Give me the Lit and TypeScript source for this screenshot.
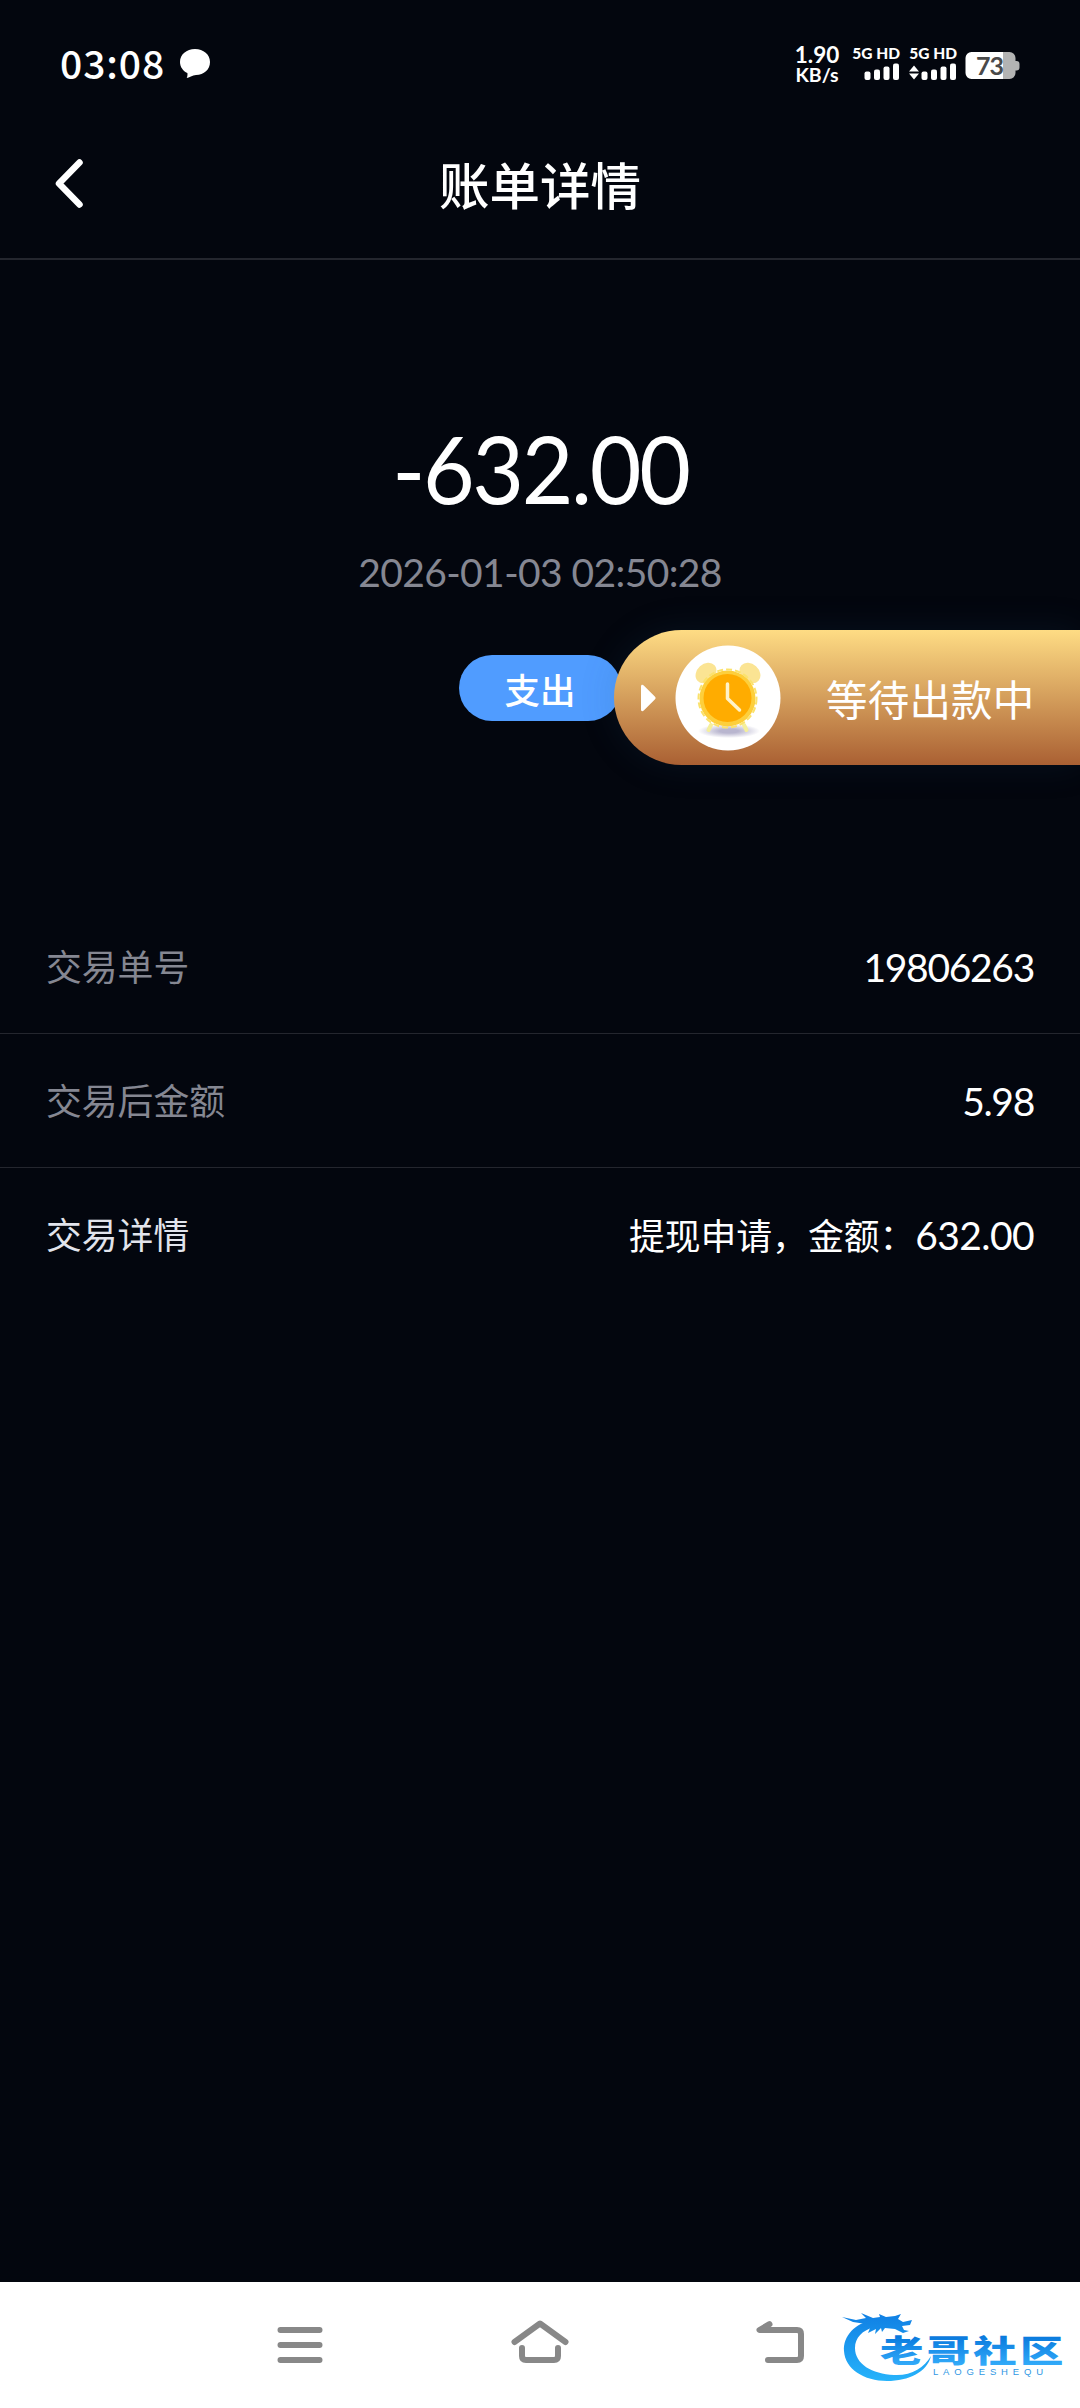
import { LitElement, css, html, svg } from "lit";
import { customElement, property } from "lit/decorators.js";

interface DetailRow {
  label: string;
  value: string;
  strong?: boolean;
}

const ROWS: DetailRow[] = [
  { label: "交易单号", value: "19806263" },
  { label: "交易后金额", value: "5.98" },
  { label: "交易详情", value: "提现申请，金额：632.00", strong: true },
];

@customElement("bill-status-bar")
export class BillStatusBar extends LitElement {
  static styles = css`
    :host {
      display: flex;
      justify-content: space-between;
      height: 126px;
      padding: 0 60px;
      box-sizing: border-box;
      color: #fff;
    }

    .left,
    .right {
      display: flex;
      align-items: flex-start;
    }

    .time {
      font: 500 39px/40px "Noto Sans CJK SC", sans-serif;
      letter-spacing: 0.9px;
      padding-top: 42px;
      margin-right: 14px;
    }

    .bubble {
      margin-top: 48px;
    }

    .speed {
      width: 46px;
      margin-right: 11px;
      padding-top: 45px;
      text-align: center;
      font: 700 22.500px/20px Lato, sans-serif;
      white-space: nowrap;
    }

    .speed .unit {
      display: block;
      font-size: 19.500px;
      line-height: 19px;
    }

    .sim {
      display: flex;
      flex-direction: column;
      align-items: flex-end;
      width: 49px;
      margin-right: 8px;
      padding-top: 45px;
    }

    .net {
      font: 900 15.500px/16px Lato, sans-serif;
      white-space: nowrap;
    }

    .battery {
      margin-top: 52px;
      overflow: visible;
    }

    .level {
      font: 700 25px Lato, sans-serif;
      fill: #4a4a4a;
    }
  `;

  private renderSim(arrows: boolean) {
    return html`
      <div class="sim">
        <span class="net">5G HD</span>
        <svg width="48" height="20" viewBox="0 0 48 20" fill="#fff">
          ${arrows ? svg`<path d="M5 4.500l5 6H0zM5 18.500l5-6H0z" />` : ""}
          <rect x="12.500" y="10.500" width="6" height="8.500" rx="2" />
          <rect x="22" y="8.500" width="6" height="10.500" rx="2" />
          <rect x="31.500" y="5.500" width="6" height="13.500" rx="2" />
          <rect x="41" y="2.500" width="6" height="16.500" rx="2" />
        </svg>
      </div>
    `;
  }

  render() {
    return html`
      <div class="left">
        <span class="time">03:08</span>
        <svg class="bubble" width="32" height="31" viewBox="0 0 32 31" fill="#fff">
          <path d="M16 1C24.500 1 31 6.500 31 14s-6 13-14 13c-3.500 0-7 2.800-9.300 3 .8-1.700.9-3.400.7-4.900C4 22.900 1 19 1 14 1 6.500 7.500 1 16 1z" />
        </svg>
      </div>
      <div class="right">
        <div class="speed">1.90<span class="unit">KB/s</span></div>
        ${this.renderSim(false)} ${this.renderSim(true)}
        <svg class="battery" width="55" height="28" viewBox="0 0 55 28">
          <path fill="#b3b3b3" d="M38 0h6.500a6 6 0 0 1 6 6v3h1a3 3 0 0 1 3 3v3.500a3 3 0 0 1-3 3h-1V21a6 6 0 0 1-6 6H38z" />
          <path fill="#fff" d="M38 0H6.500a6 6 0 0 0-6 6v15a6 6 0 0 0 6 6H38z" />
          <text class="level" x="11" y="22.500" textLength="28">73</text>
        </svg>
      </div>
    `;
  }
}

@customElement("bill-row")
export class BillRow extends LitElement {
  static styles = css`
    :host {
      display: block;
    }

    .row {
      display: flex;
      align-items: center;
      justify-content: space-between;
      height: 134px;
      padding: 3px 46px 0 46px;
      box-sizing: border-box;
      border-bottom: 1px solid #24262e;
      font: 400 35.800px/50px Lato, "Noto Sans CJK SC", sans-serif;
      color: #fff;
    }

    .row.strong {
      border-bottom-color: transparent;
    }

    .label {
      color: #858792;
    }

    .strong .label {
      color: #e2e4ec;
    }

    .digits {
      font-size: 39px;
      letter-spacing: -1.300px;
    }

    .strong .digits {
      letter-spacing: -0.600px;
    }
  `;

  @property() label = "";
  @property() value = "";
  @property({ type: Boolean }) strong = false;

  render() {
    // digits are set larger than the Chinese text beside them
    const split = this.value.search(/[\d.]+$/);
    return html`
      <div class="row ${this.strong ? "strong" : ""}">
        <span class="label">${this.label}</span>
        <span class="value"
          >${this.value.slice(0, split)}<span class="digits">${this.value.slice(split)}</span></span
        >
      </div>
    `;
  }
}

@customElement("payout-float")
export class PayoutFloat extends LitElement {
  static styles = css`
    :host {
      display: block;
    }

    .float {
      display: flex;
      align-items: center;
      width: 466px;
      height: 135px;
      padding-left: 26px;
      box-sizing: border-box;
      border-radius: 68px 0 0 68px;
      background: linear-gradient(#fedc84, #aa6033);
      box-shadow: 0 0 36px rgba(40, 90, 120, 0.15);
    }

    .clock {
      margin-left: 19px;
    }

    .text {
      margin-left: 45px;
      font: 400 41.500px/60px "Noto Sans CJK SC", sans-serif;
      letter-spacing: 0.200px;
      color: #fff;
      white-space: nowrap;
    }
  `;

  render() {
    return html`
      <div class="float">
        <svg width="16" height="28" viewBox="0 0 16 28" fill="#fff">
          <path d="M1 2.500C1 .6 2.500.2 4 1.700L14.800 12.400q1.600 1.600 0 3.200L4 26.300C2.500 27.800 1 27.400 1 25.500z" />
        </svg>
        <svg class="clock" width="106" height="106" viewBox="0 0 106 106">
          <defs>
            <radialGradient id="shade">
              <stop offset="0.3" stop-color="#b9b6cf" />
              <stop offset="1" stop-color="#b9b6cf" stop-opacity="0" />
            </radialGradient>
          </defs>
          <circle cx="53" cy="53" r="52.500" fill="#fff" />
          <ellipse cx="54" cy="86" rx="31" ry="7" fill="url(#shade)" />
          <g fill="#fbe493">
            <ellipse cx="31" cy="28" rx="11.500" ry="9" transform="rotate(-42 31 28)" />
            <ellipse cx="75" cy="28" rx="11.500" ry="9" transform="rotate(42 75 28)" />
          </g>
          <path d="M36 80l-2.500 5M69 80l2.500 5" stroke="#f5ef9b" stroke-width="4" stroke-linecap="round" />
          <circle cx="52.500" cy="53.500" r="28" fill="#fdcf3c" />
          <circle cx="52.500" cy="53.500" r="29" fill="none" stroke="#fbe26c" stroke-width="2" stroke-dasharray="6 3" />
          <circle cx="52.500" cy="53" r="24" fill="#ffac00" />
          <path d="M52.500 39v14.500l12 11.500" fill="none" stroke="#fff3c9" stroke-width="3.500" stroke-linecap="round" stroke-linejoin="round" />
        </svg>
        <span class="text">等待出款中</span>
      </div>
    `;
  }
}

@customElement("system-nav")
export class SystemNav extends LitElement {
  static styles = css`
    :host {
      display: block;
      background: #fff;
    }

    .nav {
      display: grid;
      grid-template-columns: repeat(3, 240px);
      justify-content: center;
      justify-items: center;
      height: 126px;
      padding-top: 33px;
      box-sizing: border-box;
    }

    .nav svg {
      fill: none;
      stroke: #888;
      stroke-width: 6;
      stroke-linecap: round;
      stroke-linejoin: round;
    }
  `;

  render() {
    return html`
      <div class="nav">
        <svg width="60" height="60" viewBox="0 0 60 60">
          <path d="M10.500 15h39M10.500 30h39M10.500 45h39" />
        </svg>
        <svg width="60" height="60" viewBox="0 0 60 60">
          <path d="M4.500 27L30 8.500L55.500 27M12 33v8q0 4 4 4h28q4 0 4-4v-8" />
        </svg>
        <svg width="60" height="60" viewBox="0 0 60 60">
          <path d="M19.500 9.200L9.500 15H47q4 0 4 4v22q0 4-4 4H18" />
        </svg>
      </div>
    `;
  }
}

@customElement("site-logo")
export class SiteLogo extends LitElement {
  static styles = css`
    :host {
      display: block;
    }

    svg {
      display: block;
    }

    .name {
      font: 900 31px "Noto Sans CJK SC", sans-serif;
    }

    .latin {
      font: 400 9.500px "Liberation Sans", sans-serif;
      fill: #2f97e4;
    }
  `;

  render() {
    return html`
      <svg width="230" height="80" viewBox="0 0 230 80">
        <defs>
          <linearGradient id="blue" gradientUnits="userSpaceOnUse" x1="0" y1="10" x2="0" y2="78">
            <stop offset="0" stop-color="#1080e4" />
            <stop offset="1" stop-color="#27b4fb" />
          </linearGradient>
          <linearGradient id="letters" x1="0" y1="0" x2="0" y2="1">
            <stop offset="0.2" stop-color="#0878dc" />
            <stop offset="1" stop-color="#3ab4ff" />
          </linearGradient>
        </defs>
        <path
          fill="url(#blue)"
          d="M33 16C15 19 3 32 4 47c1 18 20 30 43 30 22 0 40-9 44-25C84 64 71 72 54 71 32 70 15 60 15 44c0-10 7-18 20-21z"
        />
        <path
          fill="url(#blue)"
          d="M2 13l14 3 10-2-5-5 12 5 7-1-1-3 7 3 9-1 6-2-3 5 5 3 9-2-2 5-8 1 2 4 5 1-6 2-8-4-10-1-3 4-1-4-6 6 1-5-8 4 2-5-9 1 5-5-13-2z"
        />
        <g fill="url(#letters)" class="name">
          <text transform="translate(40 57.500) scale(1.4 0.98)" textLength="131">老哥社区</text>
        </g>
        <text class="latin" x="93" y="70.500" textLength="110">LAOGESHEQU</text>
      </svg>
    `;
  }
}

@customElement("app-root")
export class AppRoot extends LitElement {
  static styles = css`
    :host {
      display: block;
    }

    .screen {
      position: relative;
      display: flex;
      flex-direction: column;
      width: 1080px;
      height: 2408px;
      overflow: hidden;
      background: #03060e;
      color: #fff;
      font-family: Lato, "Noto Sans CJK SC", sans-serif;
    }

    .header {
      display: grid;
      grid-template-columns: 140px 1fr 140px;
      align-items: center;
      height: 134px;
      padding-bottom: 18px;
      box-sizing: border-box;
      border-bottom: 2px solid #24262e;
    }

    .back {
      margin-left: 54px;
    }

    .title {
      margin: 0;
      text-align: center;
      font: 500 50.500px/60px "Noto Sans CJK SC", sans-serif;
    }

    .summary {
      display: flex;
      flex-direction: column;
      align-items: center;
      height: 640px;
      padding-top: 148px;
      box-sizing: border-box;
    }

    .amount {
      font-size: 93px;
      line-height: 120px;
      letter-spacing: -2.500px;
      transform: scaleX(0.96);
    }

    .date {
      margin-top: 20px;
      font-size: 39px;
      line-height: 48px;
      letter-spacing: -0.600px;
      color: #858792;
      white-space: pre;
    }

    .tag {
      width: 162px;
      height: 66px;
      margin-top: 59px;
      border-radius: 33px;
      background: #509cff;
      text-align: center;
      font: 500 35.500px/68px "Noto Sans CJK SC", sans-serif;
    }

    .rows {
      flex: 1;
    }

    .float {
      position: absolute;
      right: 0;
      top: 630px;
    }

    .logo {
      position: absolute;
      left: 840px;
      top: 2304px;
    }
  `;

  render() {
    return html`
      <div class="screen">
        <bill-status-bar></bill-status-bar>
        <header class="header">
          <svg class="back" width="30" height="50" viewBox="0 0 30 50">
            <path d="M25.500 4.500L5 25.500l20.500 21" fill="none" stroke="#fff" stroke-width="6.500" stroke-linecap="round" stroke-linejoin="round" />
          </svg>
          <h1 class="title">账单详情</h1>
        </header>
        <section class="summary">
          <div class="amount">-632.00</div>
          <div class="date">2026-01-03 02:50:28</div>
          <div class="tag">支出</div>
        </section>
        <div class="rows">
          ${ROWS.map(
            (row) =>
              html`<bill-row .label=${row.label} .value=${row.value} .strong=${!!row.strong}></bill-row>`,
          )}
        </div>
        <system-nav></system-nav>
        <payout-float class="float"></payout-float>
        <site-logo class="logo"></site-logo>
      </div>
    `;
  }
}

declare global {
  interface HTMLElementTagNameMap {
    "app-root": AppRoot;
    "bill-status-bar": BillStatusBar;
    "bill-row": BillRow;
    "payout-float": PayoutFloat;
    "system-nav": SystemNav;
    "site-logo": SiteLogo;
  }
}
